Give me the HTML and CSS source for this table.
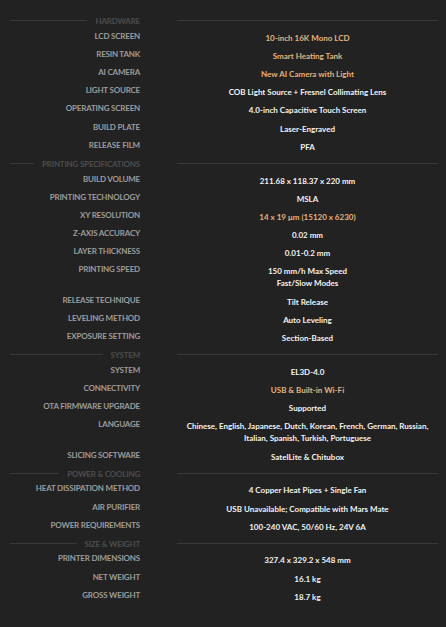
FILE: index.html
```html
<!DOCTYPE html>
<html>
<head>
<meta charset="utf-8">
<link rel="stylesheet" href="styles.css">
</head>
<body>
<div class="specs">
  <div class="sec-head"><div class="sec-left"><span class="line"></span><span class="sec-title">HARDWARE</span></div><span class="line"></span></div>
  <div class="row"><div class="label">LCD SCREEN</div><div class="value gold">10-inch 16K Mono LCD</div></div>
  <div class="row"><div class="label">RESIN TANK</div><div class="value gold">Smart Heating Tank</div></div>
  <div class="row"><div class="label">AI CAMERA</div><div class="value gold">New AI Camera with Light</div></div>
  <div class="row"><div class="label">LIGHT SOURCE</div><div class="value">COB Light Source + Fresnel Collimating Lens</div></div>
  <div class="row"><div class="label">OPERATING SCREEN</div><div class="value">4.0-inch Capacitive Touch Screen</div></div>
  <div class="row"><div class="label">BUILD PLATE</div><div class="value">Laser-Engraved</div></div>
  <div class="row"><div class="label">RELEASE FILM</div><div class="value">PFA</div></div>

  <div class="sec-head"><div class="sec-left"><span class="line"></span><span class="sec-title">PRINTING SPECIFICATIONS</span></div><span class="line"></span></div>
  <div class="row"><div class="label">BUILD VOLUME</div><div class="value">211.68 x 118.37 x 220 mm</div></div>
  <div class="row"><div class="label">PRINTING TECHNOLOGY</div><div class="value">MSLA</div></div>
  <div class="row"><div class="label">XY RESOLUTION</div><div class="value gold">14 x 19 μm (15120 x 6230)</div></div>
  <div class="row"><div class="label">Z-AXIS ACCURACY</div><div class="value">0.02 mm</div></div>
  <div class="row"><div class="label">LAYER THICKNESS</div><div class="value">0.01-0.2 mm</div></div>
  <div class="row"><div class="label">PRINTING SPEED</div><div class="value">150 mm/h Max Speed<br>Fast/Slow Modes</div></div>
  <div class="row"><div class="label">RELEASE TECHNIQUE</div><div class="value">Tilt Release</div></div>
  <div class="row"><div class="label">LEVELING METHOD</div><div class="value">Auto Leveling</div></div>
  <div class="row"><div class="label">EXPOSURE SETTING</div><div class="value">Section-Based</div></div>

  <div class="sec-head"><div class="sec-left"><span class="line"></span><span class="sec-title">SYSTEM</span></div><span class="line"></span></div>
  <div class="row"><div class="label">SYSTEM</div><div class="value">EL3D-4.0</div></div>
  <div class="row"><div class="label">CONNECTIVITY</div><div class="value gold">USB &amp; Built-in Wi-Fi</div></div>
  <div class="row"><div class="label">OTA FIRMWARE UPGRADE</div><div class="value">Supported</div></div>
  <div class="row"><div class="label">LANGUAGE</div><div class="value">Chinese, English, Japanese, Dutch, Korean, French, German, Russian,<br>Italian, Spanish, Turkish, Portuguese</div></div>
  <div class="row"><div class="label">SLICING SOFTWARE</div><div class="value">SatelLite &amp; Chitubox</div></div>

  <div class="sec-head"><div class="sec-left"><span class="line"></span><span class="sec-title">POWER &amp; COOLING</span></div><span class="line"></span></div>
  <div class="row"><div class="label">HEAT DISSIPATION METHOD</div><div class="value">4 Copper Heat Pipes + Single Fan</div></div>
  <div class="row"><div class="label">AIR PURIFIER</div><div class="value">USB Unavailable; Compatible with Mars Mate</div></div>
  <div class="row"><div class="label">POWER REQUIREMENTS</div><div class="value">100-240 VAC, 50/60 Hz, 24V 6A</div></div>

  <div class="sec-head"><div class="sec-left"><span class="line"></span><span class="sec-title">SIZE &amp; WEIGHT</span></div><span class="line"></span></div>
  <div class="row"><div class="label">PRINTER DIMENSIONS</div><div class="value">327.4 x 329.2 x 548 mm</div></div>
  <div class="row"><div class="label">NET WEIGHT</div><div class="value">16.1 kg</div></div>
  <div class="row"><div class="label">GROSS WEIGHT</div><div class="value">18.7 kg</div></div>
</div>
</body>
</html>
```
FILE: styles.css
```css
html, body {
  margin: 0;
  padding: 0;
  background: #222222;
}
body {
  height: 627px;
  font-family: "Lato", "Noto Sans", sans-serif;
}
.specs {
  display: grid;
  grid-template-columns: 130px 1fr;
  column-gap: 37px;
  padding: 13px 8px 0 10px;
}
.sec-head {
  display: contents;
}
.sec-left {
  display: flex;
  align-items: center;
  gap: 8px;
  height: 15.6px;
}
.sec-head .line {
  flex: 1;
  height: 1px;
  background: #393939;
  align-self: center;
}
.sec-head > .line {
  display: block;
}
.sec-title {
  font-size: 8px;
  font-weight: 700;
  letter-spacing: -0.2px;
  color: #4d4d4d;
  white-space: nowrap;
  line-height: 12px;
}
.row {
  display: contents;
}
.label {
  text-align: right;
  font-size: 8px;
  font-weight: 700;
  letter-spacing: -0.2px;
  color: #9c9c9c;
  line-height: 12px;
  padding: 1px 0 5.2px;
  white-space: nowrap;
}
.value {
  text-align: center;
  font-size: 8px;
  font-weight: 700;
  color: #f2f2f2;
  line-height: 12px;
  padding: 3px 0 3.2px;
  white-space: nowrap;
}
.value.gold {
  color: #e2b47e;
}
```
